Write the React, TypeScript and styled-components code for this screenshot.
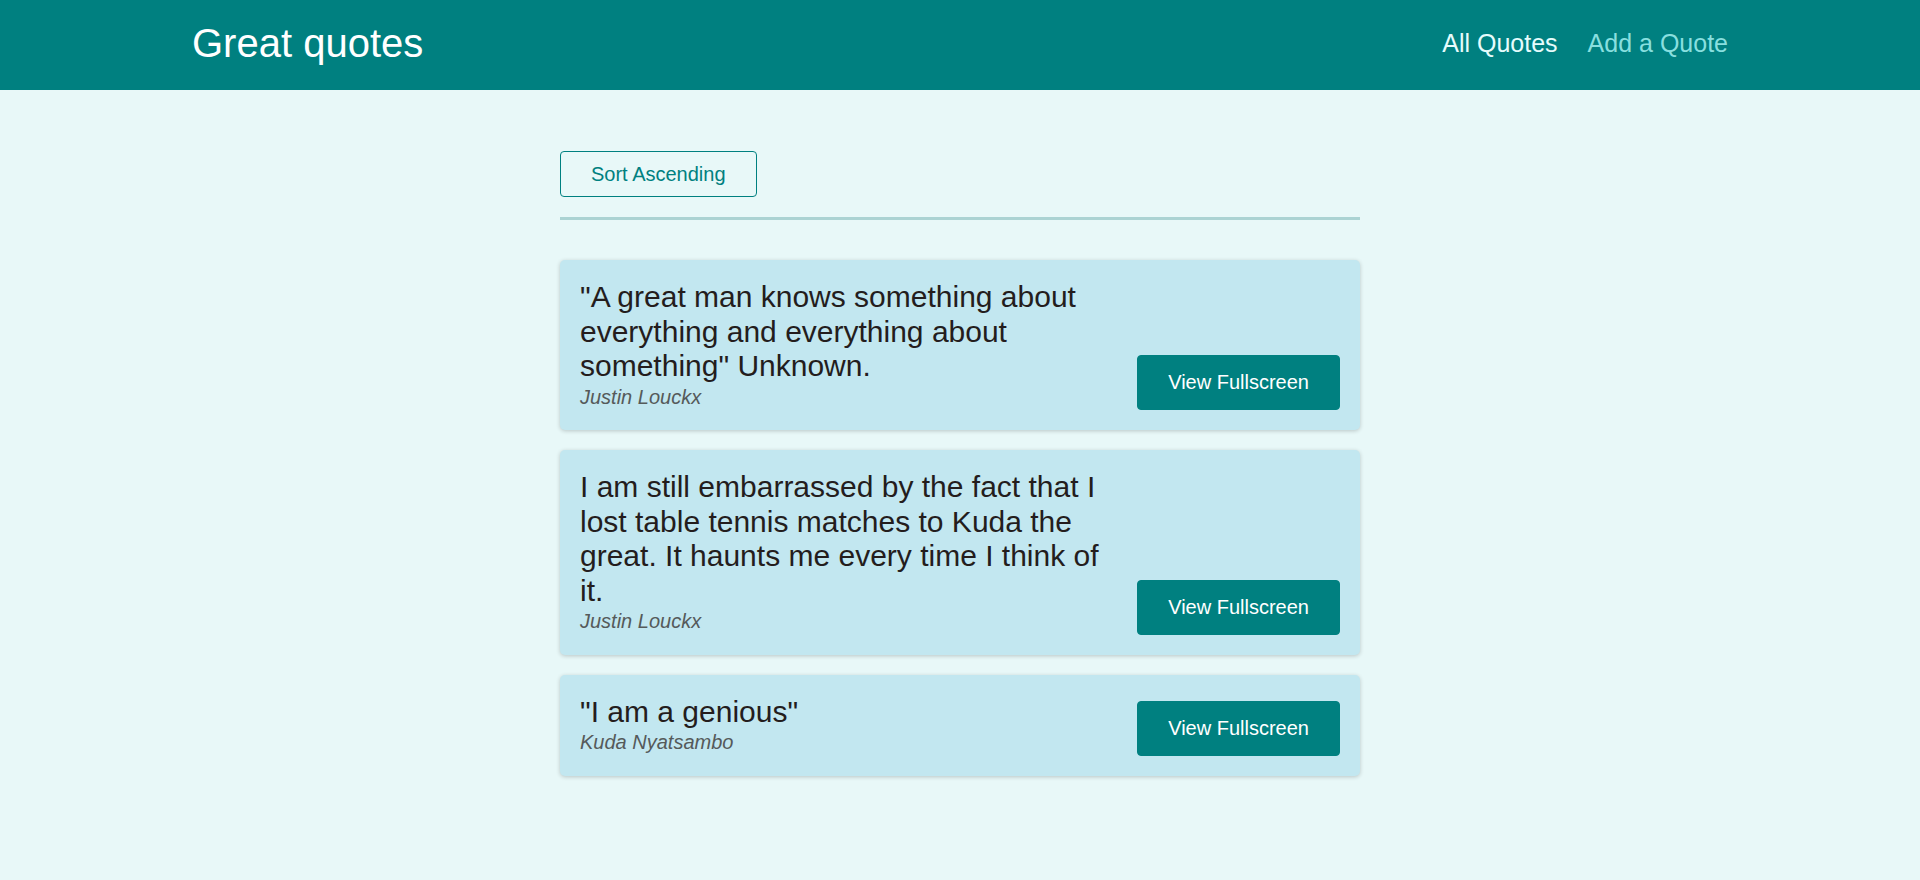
import React from "react";
import styled, { createGlobalStyle } from "styled-components";

const GlobalStyle = createGlobalStyle`
  * { box-sizing: border-box; }
  html, body { margin: 0; padding: 0; }
  body {
    background-color: #e8f8f8;
    font-family: "Liberation Sans", Arial, sans-serif;
    font-size: 20px;
    min-height: 880px;
  }
`;

const Header = styled.header`
  width: 100%;
  height: 90px;
  display: flex;
  align-items: center;
  justify-content: space-between;
  background-color: #008080;
  padding: 0 10% 4px;
`;

const Logo = styled.div`
  font-size: 40px;
  color: #ffffff;
`;

const NavList = styled.ul`
  list-style: none;
  margin: 0;
  padding: 0;
  display: flex;
  align-items: center;
`;

const NavItem = styled.li`
  margin-left: 30px;
`;

const NavLink = styled.a<{ $active?: boolean }>`
  text-decoration: none;
  font-size: 25px;
  color: ${(p) => (p.$active ? "#e6fcfc" : "#88dfdf")};
  cursor: pointer;
`;

const Main = styled.main`
  width: 800px;
  margin: 61px auto 0;
`;

const Sorting = styled.div`
  padding-bottom: 20px;
  border-bottom: 3px solid #abd3d3;
`;

const OutlineButton = styled.button`
  font: inherit;
  font-size: 20px;
  line-height: 24px;
  color: #008080;
  background: transparent;
  border: 1px solid #008080;
  border-radius: 4px;
  padding: 10px 30px;
  cursor: pointer;
`;

const List = styled.ul`
  list-style: none;
  margin: 0;
  padding: 40px 0 0;
  display: flex;
  flex-direction: column;
  gap: 20px;
`;

const Item = styled.li`
  display: flex;
  justify-content: space-between;
  align-items: flex-end;
  gap: 20px;
  background-color: #c2e7f0;
  border-radius: 5px;
  padding: 20px;
  box-shadow: 0 1px 4px rgba(0, 0, 0, 0.2);
`;

const Figure = styled.figure`
  flex: 1;
  min-width: 0;
  margin: 0;
`;

const Quote = styled.blockquote`
  margin: 0;
  font-size: 30px;
  line-height: 34.5px;
  color: #241d1d;
`;

const QuoteText = styled.p`
  margin: 0;
`;

const Caption = styled.figcaption`
  font-style: italic;
  font-size: 20px;
  line-height: 26.5px;
  color: #555a5a;
`;

const SolidButton = styled.a`
  flex-shrink: 0;
  display: inline-block;
  font-size: 20px;
  line-height: 23px;
  color: #ffffff;
  background-color: #008080;
  border: 1px solid #008080;
  border-radius: 4px;
  padding: 15px 30px;
  text-decoration: none;
  cursor: pointer;
`;

const quotes = [
  {
    id: "q1",
    text: "\"A great man knows something about everything and everything about something\" Unknown.",
    author: "Justin Louckx",
  },
  {
    id: "q2",
    text: "I am still embarrassed by the fact that I lost table tennis matches to Kuda the great. It haunts me every time I think of it.",
    author: "Justin Louckx",
  },
  {
    id: "q3",
    text: "\"I am a genious\"",
    author: "Kuda Nyatsambo",
  },
];

export default function App() {
  return (
    <>
      <GlobalStyle />
      <Header>
        <Logo>Great quotes</Logo>
        <nav>
          <NavList>
            <NavItem>
              <NavLink $active>All Quotes</NavLink>
            </NavItem>
            <NavItem>
              <NavLink>Add a Quote</NavLink>
            </NavItem>
          </NavList>
        </nav>
      </Header>
      <Main>
        <Sorting>
          <OutlineButton>Sort Ascending</OutlineButton>
        </Sorting>
        <List>
          {quotes.map((q) => (
            <Item key={q.id}>
              <Figure>
                <Quote>
                  <QuoteText>{q.text}</QuoteText>
                </Quote>
                <Caption>{q.author}</Caption>
              </Figure>
              <SolidButton>View Fullscreen</SolidButton>
            </Item>
          ))}
        </List>
      </Main>
    </>
  );
}
